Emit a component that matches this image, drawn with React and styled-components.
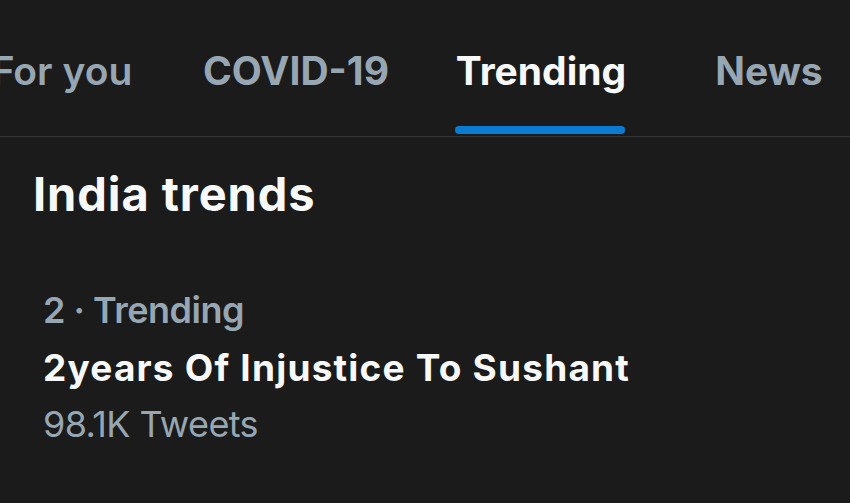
import styled, { createGlobalStyle } from 'styled-components';

const GlobalStyle = createGlobalStyle`
  html, body {
    margin: 0;
    padding: 0;
    background: #1b1b1b;
    overflow: hidden;
  }
  body {
    font-family: "Inter", "Roboto", "Liberation Sans", sans-serif;
  }
`;

const Page = styled.div`
  width: 850px;
  height: 503px;
  background: #1b1b1b;
  overflow: hidden;
`;

const TabBar = styled.nav`
  display: flex;
  height: 136px;
  border-bottom: 1px solid #343536;
  margin-left: -55px;
`;

const Tab = styled.div`
  flex: 0 0 ${p => p.$width}px;
  display: flex;
  justify-content: center;
  align-items: flex-start;
  padding-top: 51px;
  box-sizing: border-box;
  font-size: 39px;
  font-weight: ${p => p.$weight};
  color: ${p => (p.$active ? '#f7f9f9' : '#97a6b3')};
  line-height: 1;
`;

const TabLabel = styled.span`
  position: relative;
  display: inline-block;
`;

const Underline = styled.span`
  position: absolute;
  left: -1px;
  right: 1px;
  top: 75px;
  height: 8px;
  border-radius: 4px;
  background: #0a7bd0;
`;

const Section = styled.section`
  padding: 30px 0 0 33px;
`;

const Heading = styled.h2`
  margin: 0;
  font-size: 47px;
  font-weight: 700;
  letter-spacing: 0.9px;
  color: #f7f9f9;
  line-height: 54px;
`;

const TrendItem = styled.div`
  padding: 61px 0 0 10px;
  display: flex;
  flex-direction: column;
`;

const Meta = styled.div`
  font-size: 36px;
  font-weight: 600;
  letter-spacing: -0.5px;
  color: #97a6b3;
  line-height: 57px;
`;

const Title = styled.div`
  font-size: 37px;
  font-weight: 700;
  letter-spacing: 1.2px;
  color: #f7f9f9;
  line-height: 57px;
`;

const Count = styled.div`
  font-size: 36px;
  font-weight: 400;
  letter-spacing: -0.6px;
  color: #97a6b3;
  line-height: 57px;
`;

const tabs = [
  { label: 'For you', width: 234, weight: 600 },
  { label: 'COVID-19', width: 234, weight: 700 },
  { label: 'Trending', width: 256, weight: 700, active: true },
  { label: 'News', width: 200, weight: 700 },
];

export default function App() {
  return (
    <Page>
      <GlobalStyle />
      <TabBar>
        {tabs.map(t => (
          <Tab key={t.label} $width={t.width} $weight={t.weight} $active={t.active}>
            <TabLabel>
              {t.label}
              {t.active && <Underline />}
            </TabLabel>
          </Tab>
        ))}
      </TabBar>
      <Section>
        <Heading>India trends</Heading>
        <TrendItem>
          <Meta>2 · Trending</Meta>
          <Title>2years Of Injustice To Sushant</Title>
          <Count>98.1K Tweets</Count>
        </TrendItem>
      </Section>
    </Page>
  );
}
